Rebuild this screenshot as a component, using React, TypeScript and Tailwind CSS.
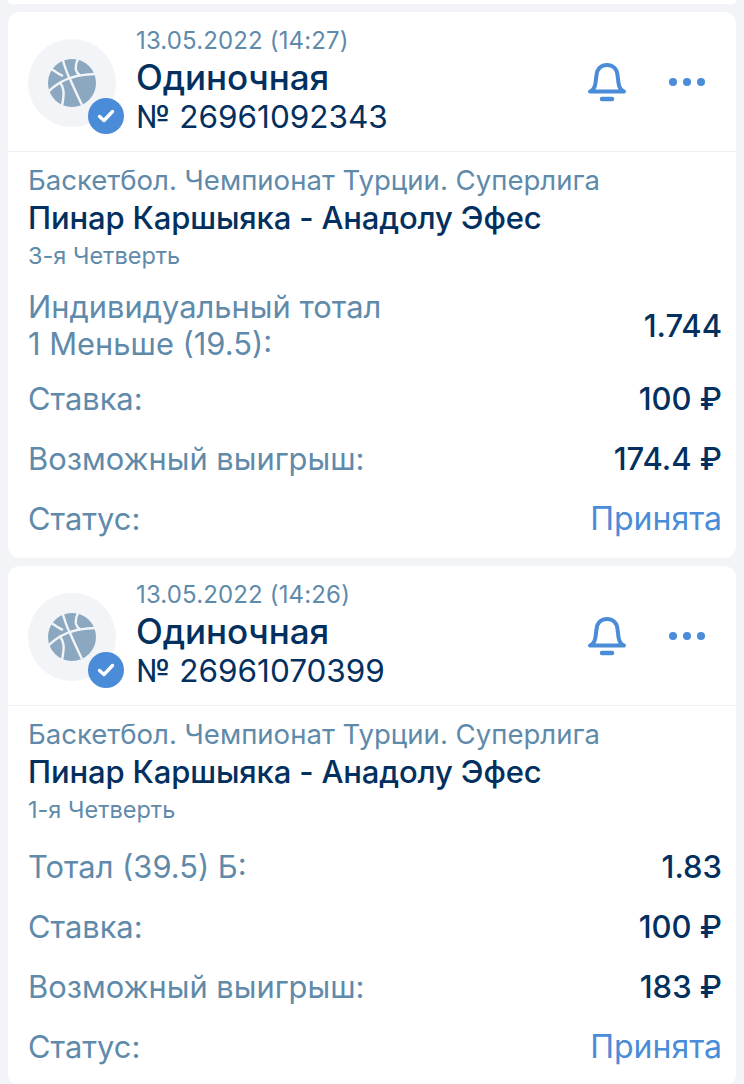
import React from 'react';

type Row = { label: React.ReactNode; value: string; accent?: boolean };

function Ball() {
  return (
    <svg width="48" height="48" viewBox="0 0 48 48" fill="none">
      <circle cx="24" cy="24" r="24" fill="#8ba8c0" />
      <g stroke="#f2f4f8" strokeWidth="2.400" fill="none">
        <path d="M14.500 0C17 8 19 15 22 20C26 29 30 38 34 46" />
        <path d="M0 33C4 29 8 26 12 23.500C18 20 24 18 29 17C35 16 41 15 47 15" />
        <path d="M3.500 10C8 13 11 15.500 15 17" />
        <path d="M30 0C28 4 27.500 8 28 11C28.500 13 30 15 32 16.500" />
        <path d="M14 47C15 42 16 37 15.500 32C15 29 14 26 12 23.500" />
      </g>
    </svg>
  );
}

function Bell() {
  return (
    <svg width="40" height="40" viewBox="0 0 40 40" fill="none" stroke="#4a8cd8" strokeLinecap="round" strokeLinejoin="round">
      <path d="M3 29.500C6.500 28 8 25 8.500 21L9.500 13C10.300 6.500 14.500 3 20 3C25.500 3 29.700 6.500 30.500 13L31.500 21C32 25 33.500 28 37 29.500H3Z" strokeWidth="4" />
      <path d="M15 37H25" strokeWidth="4.500" />
    </svg>
  );
}

function Card({ date, num, period, rows }: { date: string; num: string; period: string; rows: Row[] }) {
  return (
    <div className="bg-white rounded-xl mx-2 mb-2 pb-[10px]">
      <div className="flex items-start h-[140px] border-b border-[#eceff4]">
        <div className="relative ml-5 mt-[27px] w-[88px] h-[88px] rounded-full bg-[#f2f4f8] flex items-center justify-center shrink-0">
          <Ball />
          <div className="absolute left-[60px] top-[59px] w-9 h-9 rounded-full bg-[#4a8cd8] flex items-center justify-center">
            <svg width="20" height="20" viewBox="0 0 20 20" fill="none" stroke="#fff" strokeWidth="3.400" strokeLinecap="round" strokeLinejoin="round">
              <path d="M3.500 10.500L8 14.500L16.500 5.500" />
            </svg>
          </div>
        </div>
        <div className="ml-5 mt-[14px] flex-1">
          <div className="text-[24px] leading-[30px] text-[#5f8aaa] tracking-[0.15px]">{date}</div>
          <div className="text-[35px] leading-[42px] font-medium text-[#03305f] tracking-[-0.1px]">Одиночная</div>
          <div className="text-[31.500px] leading-[38px] text-[#03305f]">{num}</div>
        </div>
        <div className="mt-[50px] mr-[31px] flex items-center gap-[42px]">
          <Bell />
          <div className="flex gap-[6px]">
            <span className="w-2 h-2 rounded-full bg-[#4a8cd8]" />
            <span className="w-2 h-2 rounded-full bg-[#4a8cd8]" />
            <span className="w-2 h-2 rounded-full bg-[#4a8cd8]" />
          </div>
        </div>
      </div>
      <div className="pl-[20px] pr-[14px] pt-[13px]">
        <div className="text-[27.550px] leading-[30px] text-[#5f8aaa]">Баскетбол. Чемпионат Турции. Суперлига</div>
        <div className="mt-1 mb-1 text-[31px] leading-[38px] font-medium text-[#03305f] tracking-[-0.15px]">Пинар Каршыяка - Анадолу Эфес</div>
        <div className="text-[23.500px] leading-[30px] text-[#5f8aaa] mb-[11px]">{period}</div>
        {rows.map((r, i) => (
          <div key={i} className="flex items-center justify-between min-h-[60px] py-[6px]">
            <div className="text-[30.850px] leading-[37px] text-[#5f8aaa]">{r.label}</div>
            <div className={r.accent ? 'text-[32px] leading-[37px] text-[#4a8cd8]' : 'text-[31px] leading-[37px] font-medium text-[#03305f]'}>{r.value}</div>
          </div>
        ))}
      </div>
    </div>
  );
}

export default function App() {
  return (
    <div className="w-[744px] h-[1084px] overflow-hidden bg-[#f2f4f8] font-['Inter',sans-serif]">
      <div className="h-1 mx-2 mb-2 bg-white rounded-b-xl" />
      <Card
        date="13.05.2022 (14:27)"
        num="№ 26961092343"
        period="3-я Четверть"
        rows={[
          { label: <>Индивидуальный тотал<br />1 Меньше (19.5):</>, value: '1.744' },
          { label: 'Ставка:', value: '100 ₽' },
          { label: 'Возможный выигрыш:', value: '174.4 ₽' },
          { label: 'Статус:', value: 'Принята', accent: true },
        ]}
      />
      <Card
        date="13.05.2022 (14:26)"
        num="№ 26961070399"
        period="1-я Четверть"
        rows={[
          { label: 'Тотал (39.5) Б:', value: '1.83' },
          { label: 'Ставка:', value: '100 ₽' },
          { label: 'Возможный выигрыш:', value: '183 ₽' },
          { label: 'Статус:', value: 'Принята', accent: true },
        ]}
      />
    </div>
  );
}
